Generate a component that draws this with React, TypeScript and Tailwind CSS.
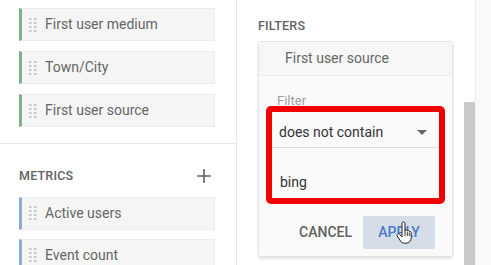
import React from "react";

function Grip() {
  return (
    <svg width="8" height="14" viewBox="0 0 8 14" className="shrink-0">
      {[0, 1, 2, 3].map((r) =>
        [0, 1].map((c) => (
          <rect key={`${r}-${c}`} x={c * 5} y={r * 4} width="2.5" height="2" fill="#c8c8c8" />
        ))
      )}
    </svg>
  );
}

function Chip({ label, accent }: { label: string; accent: "green" | "blue" }) {
  return (
    <div
      className={`flex h-[33px] w-[196px] items-center gap-[8px] border border-[#ececec] border-l-[3px] bg-[#f5f5f5] pl-[7px] ${
        accent === "green" ? "border-l-[#7fb08a]" : "border-l-[#8eaad6]"
      }`}
    >
      <Grip />
      <span className="text-[14px] text-[#666666]">{label}</span>
    </div>
  );
}

function HandCursor() {
  return (
    <svg width="20" height="24" viewBox="0 0 20 24" className="absolute left-[396px] top-[221px]">
      <path
        d="M6 2.5c0-1 .7-1.6 1.5-1.6S9 1.5 9 2.5V10l.3-1.2c.9-.4 1.8 0 2 .8.9-.4 1.8 0 2 .9.9-.3 1.9.2 1.9 1.2v5c0 3-2 5.5-5 5.5H8.5c-1.8 0-3-.8-4-2.2L1.2 15c-.6-.9-.3-1.9.5-2.2.8-.3 1.5 0 2.1.7L6 16V2.5z"
        fill="#ffffff"
        stroke="#222222"
        strokeWidth="1"
        strokeLinejoin="round"
      />
      <path d="M9 10v5M11.3 10.5v4.5M13.3 11.4v3.6" stroke="#222222" strokeWidth="0.9" />
    </svg>
  );
}

export default function App() {
  return (
    <div
      className="relative flex h-[265px] w-[491px] overflow-hidden bg-white"
      style={{ fontFamily: "Roboto, 'Liberation Sans', sans-serif" }}
    >
      {/* left column */}
      <div className="flex w-[237px] shrink-0 flex-col border-r border-[#e6e6e6]">
        <div className="flex flex-col gap-[10px] border-b border-[#e8e8e8] pb-[16px] pl-[19px] pt-[8px]">
          <Chip label="First user medium" accent="green" />
          <Chip label="Town/City" accent="green" />
          <Chip label="First user source" accent="green" />
        </div>
        <div className="flex items-center justify-between pl-[19px] pr-[24px] pt-[23px]">
          <span className="text-[12.5px] font-medium tracking-[0.2px] text-[#5f6368]">METRICS</span>
          <svg width="16" height="16" viewBox="0 0 16 16">
            <path d="M8 1v14M1 8h14" stroke="#5f6368" strokeWidth="1.6" />
          </svg>
        </div>
        <div className="flex flex-col gap-[9px] pl-[19px] pt-[11px]">
          <Chip label="Active users" accent="blue" />
          <Chip label="Event count" accent="blue" />
        </div>
      </div>

      {/* right column */}
      <div className="flex flex-1">
        <div className="w-[227px] pl-[21px] pt-[17px]">
          <div className="text-[12.5px] font-medium tracking-[0.2px] text-[#5f6368]">FILTERS</div>
          <div className="mt-[5px] w-[195px] rounded-[3px] border border-[#e4e4e4] shadow-[0_2px_3px_rgba(0,0,0,0.12)]">
            <div className="flex h-[34px] items-center border-b border-[#ececec] bg-[#f7f7f7] pl-[26px] text-[14px] text-[#666666]">
              First user source
            </div>
            <div className="bg-[#fafafa] px-[7px] pb-[7px] pt-[18px]">
              <div className="pl-[11px] text-[13px] leading-[14px] text-[#9e9e9e]">Filter</div>
              <div className="-mt-[2px] rounded-[5px] border-[6px] border-[#f20000] bg-[#fafafa]">
                <div className="flex h-[36px] items-center justify-between border-b border-[#dcdcdc] pl-[7px] pr-[12px] pt-[7px] text-[14px] text-[#333]">
                  <span>does not contain</span>
                  <svg width="10" height="5" viewBox="0 0 10 5">
                    <path d="M0 0h10L5 5z" fill="#666" />
                  </svg>
                </div>
                <div className="flex h-[50px] items-end pb-[5px] pl-[8px] text-[14px] text-[#333]">bing</div>
              </div>
              <div className="mt-[12px] flex items-center justify-end gap-[11px] pr-[10px]">
                <span className="text-[14px] font-medium text-[#616161]">CANCEL</span>
                <div className="flex h-[33px] w-[72px] items-center justify-center rounded-[2px] bg-[#d5dde9] text-[14px] font-medium text-[#4a7bc4]">
                  APPLY
                </div>
              </div>
            </div>
          </div>
        </div>
        <div className="w-[11px] pt-[102px]">
          <div className="h-full bg-[#c9c9c9]" />
        </div>
        <div className="flex-1 border-l border-[#eeeeee] bg-[#f8f9fb]" />
      </div>
      <HandCursor />
    </div>
  );
}
